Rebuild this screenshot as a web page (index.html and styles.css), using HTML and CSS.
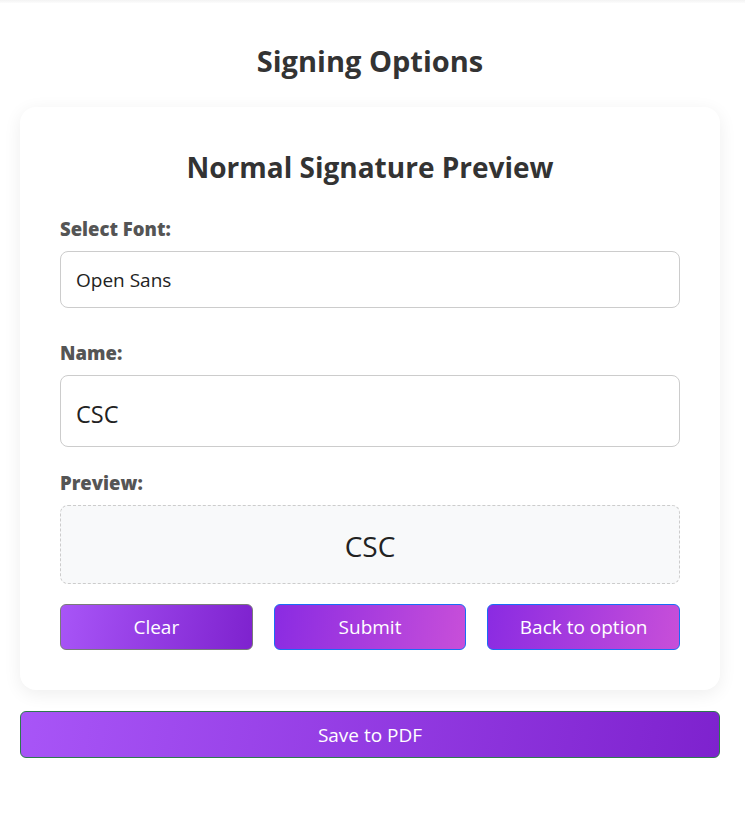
FILE: index.html
```html
<!DOCTYPE html>
<html lang="en">
<head>
<meta charset="utf-8">
<title>Signing Options</title>
<link rel="stylesheet" href="styles.css">
</head>
<body>
<div class="topbar"></div>
<main class="page">
  <h1 class="title">Signing Options</h1>
  <section class="card">
    <h2 class="card-title">Normal Signature Preview</h2>
    <div class="field field-font">
      <label class="label">Select Font:</label>
      <div class="input select">Open Sans</div>
    </div>
    <div class="field field-name">
      <label class="label">Name:</label>
      <div class="input name">CSC</div>
    </div>
    <div class="field field-preview">
      <label class="label">Preview:</label>
      <div class="preview">CSC</div>
    </div>
    <div class="actions">
      <button class="btn btn-clear">Clear</button>
      <button class="btn btn-alt">Submit</button>
      <button class="btn btn-alt">Back to option</button>
    </div>
  </section>
  <button class="btn btn-save">Save to PDF</button>
</main>
</body>
</html>
```
FILE: styles.css
```css
html, body {
  margin: 0;
  padding: 0;
  background: #ffffff;
}
body {
  font-family: "Open Sans", "Noto Sans", sans-serif;
  color: #333;
}
.topbar {
  height: 3px;
  background: linear-gradient(#f3f3f3, #fcfcfc);
}
.page {
  width: 700px;
  margin-left: 20px;
  display: flex;
  flex-direction: column;
}
.title {
  margin: 0;
  padding-top: 39px;
  height: 65px;
  text-align: center;
  font-size: 29px;
  font-weight: 700;
  line-height: 38px;
  color: #333;
}
.card {
  background: #fff;
  border-radius: 16px;
  box-shadow: 0 4px 18px rgba(0, 0, 0, 0.07);
  padding: 38px 40px 40px;
  display: flex;
  flex-direction: column;
}
.card-title {
  margin: 0 0 28px;
  text-align: center;
  font-size: 28px;
  font-weight: 700;
  line-height: 44px;
  color: #333;
}
.field {
  display: flex;
  flex-direction: column;
}
.field-font { margin-bottom: 33px; }
.field-name { margin-bottom: 24px; }
.field-preview { margin-bottom: 20px; }
.label {
  font-size: 18.5px;
  font-weight: 800;
  color: #555;
  line-height: 24px;
  margin-bottom: 10px;
}
.input {
  border: 1px solid #cccccc;
  border-radius: 8px;
  padding: 0 15px;
  display: flex;
  align-items: center;
  color: #222;
  box-sizing: border-box;
}
.select {
  height: 57px;
  font-size: 19px;
}
.name {
  height: 72px;
  font-size: 23.5px;
  padding-top: 5px;
}
.preview {
  height: 79px;
  box-sizing: border-box;
  border: 1px dashed #cccccc;
  border-radius: 8px;
  background: #f8f9fa;
  display: flex;
  align-items: center;
  justify-content: center;
  font-size: 28px;
  padding-top: 3px;
  color: #222;
}
.actions {
  display: grid;
  grid-template-columns: 1fr 1fr 1fr;
  column-gap: 21px;
}
.btn {
  height: 46px;
  border-radius: 6px;
  font-family: "Open Sans", "Noto Sans", sans-serif;
  font-size: 19px;
  color: #fff;
  cursor: pointer;
  padding: 0;
}
.btn-clear {
  background: linear-gradient(100deg, #a855f7, #7e22ce);
  border: 1px solid #7a7a7a;
}
.btn-alt {
  background: linear-gradient(100deg, #8a2be2, #c84fd9);
  border: 1.5px solid #1a6cf5;
}
.btn-save {
  margin-top: 21px;
  height: 47px;
  background: linear-gradient(100deg, #a855f7, #7e22ce);
  border: 1px solid #2c7a4e;
}
```
